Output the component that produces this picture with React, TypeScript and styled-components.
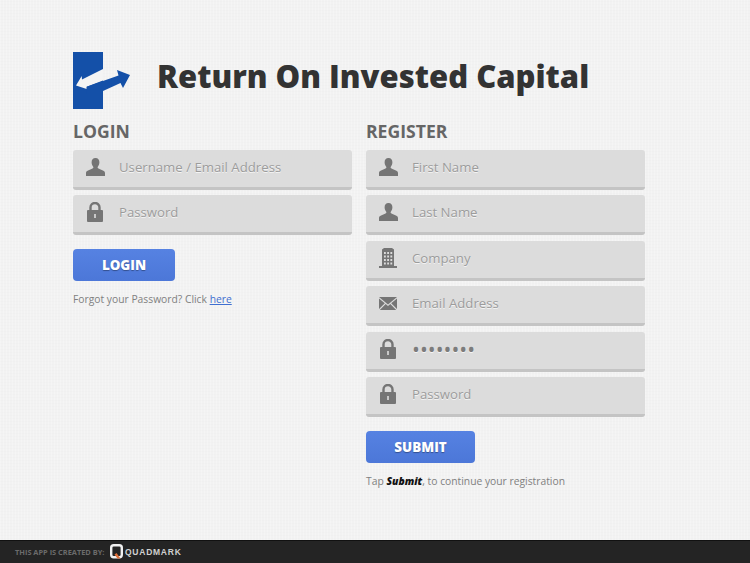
import React from 'react';
import styled, { createGlobalStyle } from 'styled-components';

const FONT = `'Open Sans', 'Liberation Sans', sans-serif`;
const ICON_GREY = '#757575';

const GlobalStyle = createGlobalStyle`
  html, body {
    margin: 0;
    padding: 0;
    height: 100%;
  }
  body {
    font-family: ${FONT};
    background-color: #f2f2f2;
    background-image:
      repeating-linear-gradient(0deg, rgba(0, 0, 0, 0.008) 0 1px, transparent 1px 3px),
      repeating-linear-gradient(90deg, rgba(255, 255, 255, 0.25) 0 1px, transparent 1px 3px);
  }
`;

const Page = styled.div`
  width: 750px;
  height: 563px;
  display: flex;
  flex-direction: column;
  overflow: hidden;
`;

const Main = styled.main`
  flex: 1;
  padding: 52px 0 0 73px;
`;

const Header = styled.header`
  display: flex;
  align-items: center;
  gap: 26px;
  height: 57px;
  margin-bottom: 10px;
`;

const Logo = styled.svg`
  width: 58px;
  height: 57px;
  flex: none;
`;

const AppTitle = styled.h1`
  margin: 0 0 10px;
  font-size: 31px;
  font-weight: 800;
  line-height: 40px;
  letter-spacing: 0;
  color: #333;
`;

const Columns = styled.div`
  display: flex;
  gap: 14px;
`;

const Column = styled.section`
  width: 279px;
`;

const Heading = styled.h2`
  margin: 0 0 7px;
  font-size: 17.6px;
  font-weight: 700;
  line-height: 24px;
  color: #666;
`;

const Fields = styled.div`
  display: flex;
  flex-direction: column;
  gap: 5.4px;
`;

const Field = styled.div`
  box-sizing: border-box;
  height: 40px;
  display: flex;
  align-items: center;
  padding-bottom: 3px;
  background: #dcdcdc;
  border-bottom: 3px solid #c4c4c4;
  border-radius: 3px;
`;

const IconSlot = styled.span`
  width: 46px;
  height: 24px;
  flex: none;
  display: flex;
  align-items: center;
  justify-content: center;
  padding-right: 2px;
  box-sizing: border-box;
`;

const Placeholder = styled.span<{ $dots?: boolean }>`
  font-size: ${(p) => (p.$dots ? '21px' : '13.2px')};
  line-height: 20px;
  color: ${(p) => (p.$dots ? '#7c7c7c' : '#9c9c9c')};
  text-shadow: 0 1px 0 rgba(255, 255, 255, 0.7);
`;

const Button = styled.button<{ $width: number }>`
  display: block;
  width: ${(p) => p.$width}px;
  height: 32px;
  margin: 14px 0 0;
  padding: 0;
  border: 0;
  border-radius: 4px;
  background: linear-gradient(#5682e2, #4c77d8);
  font-family: ${FONT};
  font-size: 13.4px;
  font-weight: 800;
  color: #fff;
  text-shadow: 0 1px 1px rgba(0, 0, 0, 0.35);
`;

const Note = styled.p`
  margin: 10px 0 0;
  font-size: 10.3px;
  line-height: 16px;
  color: #808080;
`;

const NoteLink = styled.a`
  color: #3f6fd0;
  text-decoration: underline;
`;

const Strong = styled.em`
  font-weight: 800;
  color: #111;
`;

const Footer = styled.footer`
  height: 23px;
  flex: none;
  display: flex;
  align-items: center;
  padding-left: 15px;
  background: #242424;
  box-shadow: inset 0 1px 0 #111;
`;

const Credit = styled.span`
  font-size: 7.4px;
  font-weight: 700;
  width: 95px;
  color: #6b6b6b;
  white-space: nowrap;
`;

const BrandMark = styled.svg`
  width: 13px;
  height: 15px;
  flex: none;
`;

const BrandName = styled.span`
  margin-left: 2px;
  font-family: 'Liberation Sans', sans-serif;
  font-size: 8.5px;
  font-weight: 700;
  letter-spacing: 0.75px;
  color: #d0d0d0;
`;

const UserIcon = () => (
  <svg width="19" height="18" viewBox="0 0 19 18" fill={ICON_GREY}>
    <path d="M9.5 0C6.9 0 5.6 1.900 5.600 4.300c0 1.900.7 3.300 1.600 4.400.3.5.2 1.300-.3 1.600C4.800 11.600 0 12.500 0 15v3h19v-3c0-2.500-4.800-3.400-6.900-4.700-.5-.3-.6-1.100-.3-1.600.9-1.100 1.600-2.500 1.600-4.400C13.400 1.900 12.100 0 9.500 0z" />
  </svg>
);

const LockIcon = () => (
  <svg width="16" height="20" viewBox="0 0 16 20">
    <path
      d="M3.500 9V5.500a4.500 4.500 0 0 1 9 0V9"
      fill="none"
      stroke={ICON_GREY}
      strokeWidth="2.400"
    />
    <rect x="0" y="8" width="16" height="12" rx="1" fill={ICON_GREY} />
    <rect x="7.200" y="12" width="1.600" height="4" fill="#dcdcdc" />
  </svg>
);

const BuildingIcon = () => (
  <svg width="18" height="20" viewBox="0 0 18 20" fill={ICON_GREY}>
    <path d="M5 0h8l2 1.500V18h3v2H0v-2h3V1.500z" />
    <g fill="#dcdcdc">
      {[4, 7.5, 11, 14.5].map((y) =>
        [5, 8.2, 11.4].map((x) => <rect key={`${x}-${y}`} x={x} y={y} width="1.800" height="2" />),
      )}
    </g>
  </svg>
);

const MailIcon = () => (
  <svg width="18" height="13" viewBox="0 0 18 13" fill={ICON_GREY}>
    <path d="M0 0h18L9 7.500z" />
    <path d="M0 1.500V12l5.800-5.700zM18 1.500V12l-5.800-5.700z" />
    <path d="M.8 13l5.900-5.900L9 9l2.300-1.900 5.900 5.900z" />
  </svg>
);

const icons = {
  user: <UserIcon />,
  lock: <LockIcon />,
  building: <BuildingIcon />,
  mail: <MailIcon />,
};

type FieldData = { icon: keyof typeof icons; label: string; dots?: boolean };

const loginFields: FieldData[] = [
  { icon: 'user', label: 'Username / Email Address' },
  { icon: 'lock', label: 'Password' },
];

const registerFields: FieldData[] = [
  { icon: 'user', label: 'First Name' },
  { icon: 'user', label: 'Last Name' },
  { icon: 'building', label: 'Company' },
  { icon: 'mail', label: 'Email Address' },
  { icon: 'lock', label: '••••••••', dots: true },
  { icon: 'lock', label: 'Password' },
];

const FieldList = ({ items }: { items: FieldData[] }) => (
  <Fields>
    {items.map((f, i) => (
      <Field key={i}>
        <IconSlot>{icons[f.icon]}</IconSlot>
        <Placeholder $dots={f.dots}>{f.label}</Placeholder>
      </Field>
    ))}
  </Fields>
);

export default function App() {
  return (
    <Page>
      <GlobalStyle />
      <Main>
        <Header>
          <Logo viewBox="0 0 58 57">
            <rect x="0" y="0" width="30" height="57" fill="#1450a8" />
            <path d="M3 33.500L8.700 24 9 27.500 30 17V28.600L13.700 34.700V37z" fill="#f4f4f4" />
            <path
              d="M57 23L44 18 45.500 23.500 13.700 34.700V42H30V39L47.500 31 50 36z"
              fill="#1450a8"
            />
          </Logo>
          <AppTitle>Return On Invested Capital</AppTitle>
        </Header>
        <Columns>
          <Column>
            <Heading>LOGIN</Heading>
            <FieldList items={loginFields} />
            <Button $width={102}>LOGIN</Button>
            <Note>
              Forgot your Password? Click <NoteLink href="#">here</NoteLink>
            </Note>
          </Column>
          <Column>
            <Heading>REGISTER</Heading>
            <FieldList items={registerFields} />
            <Button $width={109}>SUBMIT</Button>
            <Note>
              Tap <Strong>Submit</Strong>, to continue your registration
            </Note>
          </Column>
        </Columns>
      </Main>
      <Footer>
        <Credit>THIS APP IS CREATED BY:</Credit>
        <BrandMark viewBox="0 0 13 15">
          <rect x="1.200" y="1.200" width="10.600" height="12" rx="2.500" fill="none" stroke="#f0f0f0" strokeWidth="2.400" />
          <path d="M6.500 9l4 5.500h-3l-3-4z" fill="#e0703a" />
        </BrandMark>
        <BrandName>QUADMARK</BrandName>
      </Footer>
    </Page>
  );
}
